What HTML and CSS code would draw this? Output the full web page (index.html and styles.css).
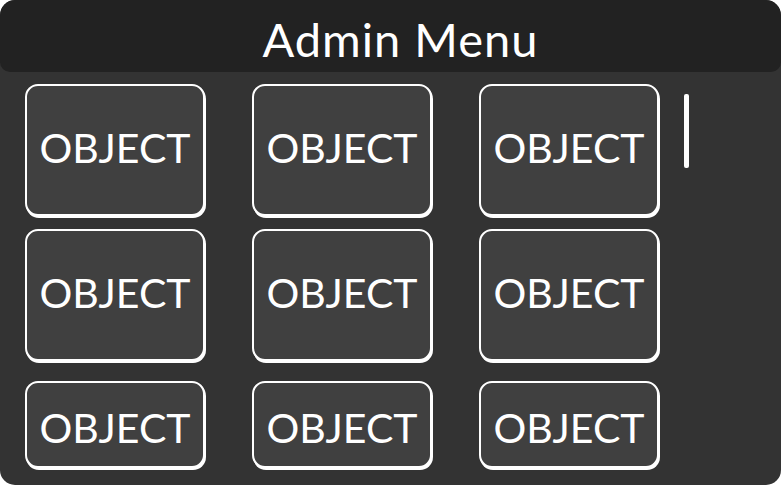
FILE: index.html
```html
<!DOCTYPE html>
<html lang="en">
<head>
  <meta charset="UTF-8">
  <title>Admin Menu</title>
  <link rel="stylesheet" href="styles.css">
</head>
<body>
  <div class="panel">
    <div class="header">Admin Menu</div>
    <div class="grid">
      <button class="obj">OBJECT</button>
      <button class="obj">OBJECT</button>
      <button class="obj">OBJECT</button>
      <button class="obj">OBJECT</button>
      <button class="obj">OBJECT</button>
      <button class="obj">OBJECT</button>
      <button class="obj short">OBJECT</button>
      <button class="obj short">OBJECT</button>
      <button class="obj short">OBJECT</button>
    </div>
    <div class="scrollbar"></div>
  </div>
</body>
</html>
```

FILE: styles.css
```css
body {
  margin: 0;
  background-color: #fff;
  font-family: Lato, "Open Sans", sans-serif;
}
.panel {
  position: relative;
  width: 781px;
  height: 485px;
  background-color: #333;
  border-radius: 15px;
  overflow: hidden;
}
.header {
  height: 72px;
  padding-left: 20px;
  background-color: #222;
  border-radius: 15px 15px 10px 10px;
  color: #fff;
  font-size: 47px;
  letter-spacing: 1px;
  line-height: 78px;
  text-align: center;
}
.grid {
  display: grid;
  grid-template-columns: repeat(3, 180px);
  grid-template-rows: 132px 132px 87px;
  column-gap: 47px;
  row-gap: 13px;
  padding: 12px 0 0 25px;
}
.obj {
  box-sizing: border-box;
  height: 132px;
  background-color: #404040;
  border: 2px solid #fff;
  border-radius: 13px;
  box-shadow: 1px 2px 0 #fff;
  color: #fff;
  font-family: inherit;
  font-size: 41px;
  padding: 0 0 5px;
  cursor: pointer;
}
.obj.short {
  height: 87px;
  margin-top: 7px;
  padding: 6px 0 0;
}
.scrollbar {
  position: absolute;
  left: 684px;
  top: 94px;
  width: 5px;
  height: 74px;
  background-color: #fff;
  border-radius: 2px;
}
```
